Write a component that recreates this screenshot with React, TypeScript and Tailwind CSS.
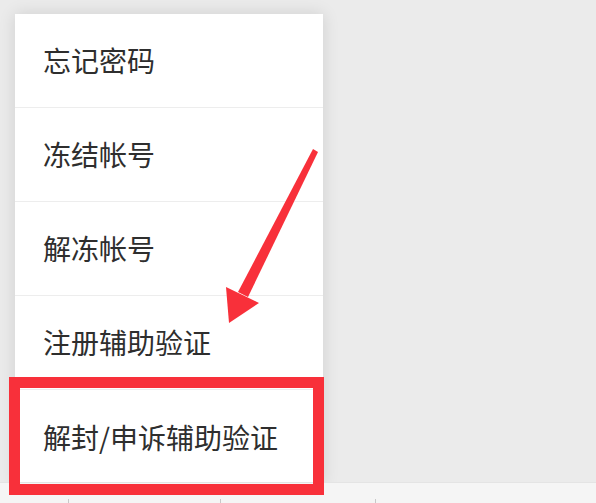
import React from "react";

const items = ["忘记密码", "冻结帐号", "解冻帐号", "注册辅助验证", "解封/申诉辅助验证"];

export default function App() {
  return (
    <div
      className="relative w-[596px] h-[503px] overflow-hidden bg-[#ebebeb]"
      style={{ fontFamily: '"Noto Sans CJK SC", "Noto Sans", sans-serif' }}
    >
      <div className="pt-[14px] pl-[15px]">
        <div className="w-[308px] bg-white shadow-[0_0_16px_rgba(0,0,0,0.12)]">
          {items.map((t, i) => (
            <div
              key={t}
              className={`h-[94px] flex items-center pl-[28px] pb-[1px] text-[28px] text-[#2e2e2e] ${
                i < items.length - 1 ? "border-b border-[#ededed]" : ""
              }`}
            >
              {t}
            </div>
          ))}
        </div>
      </div>
      <div className="absolute left-0 right-0 top-[482px] h-[21px] bg-[#f5f5f5] border-t border-[#e4e4e4]">
        <div className="absolute left-[68px] top-[16px] w-px h-[5px] bg-[#c8c8c8]" />
        <div className="absolute left-[220px] top-[16px] w-px h-[5px] bg-[#c8c8c8]" />
        <div className="absolute left-[375px] top-[16px] w-px h-[5px] bg-[#c8c8c8]" />
      </div>
      <div className="absolute left-[9px] top-[377px] w-[315px] h-[118px] border-[11px] border-[#f8303a]" />
      <svg className="absolute left-0 top-0" width="596" height="503" viewBox="0 0 596 503">
        <path d="M313 149 L318 152 L248 297 L238 292 Z" fill="#f8303a" />
        <path d="M229 323 L226 287 L259 303 Z" fill="#f8303a" />
      </svg>
    </div>
  );
}
